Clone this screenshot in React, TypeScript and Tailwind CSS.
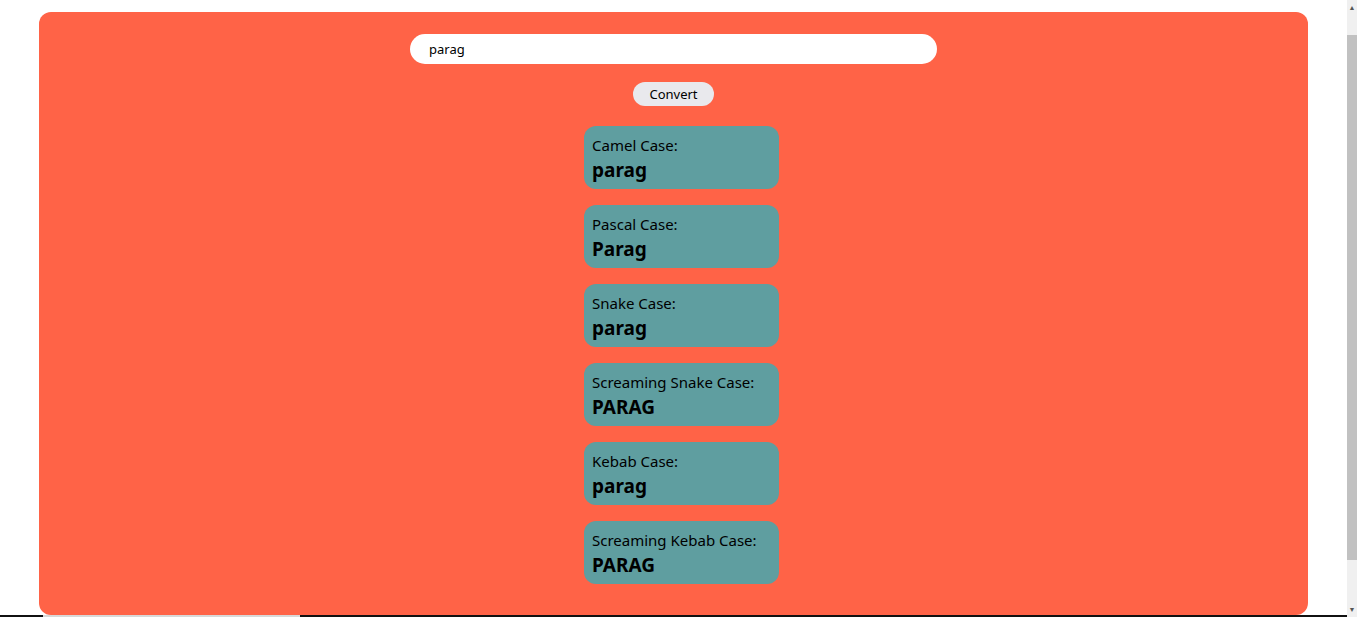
import { useState } from "react";

const font = { fontFamily: '"Noto Sans", "Open Sans", sans-serif' };

function toWords(s: string) {
  return s
    .replace(/([a-z])([A-Z])/g, "$1 $2")
    .split(/[\s_\-]+/)
    .filter(Boolean)
    .map((w) => w.toLowerCase());
}

function CaseCard({ label, value }: { label: string; value: string }) {
  return (
    <div className="w-[195px] h-[63px] rounded-xl bg-[#5f9ea0] px-2 pt-[9px] text-black">
      <div className="text-[15px] leading-[21px]">{label}</div>
      <div className="text-[19px] leading-[28px] font-bold">{value}</div>
    </div>
  );
}

export default function App() {
  const [text, setText] = useState("parag");
  const [words, setWords] = useState(toWords("parag"));

  const cap = (w: string) => w.charAt(0).toUpperCase() + w.slice(1);
  const results = [
    { label: "Camel Case:", value: words.map((w, i) => (i === 0 ? w : cap(w))).join("") },
    { label: "Pascal Case:", value: words.map(cap).join("") },
    { label: "Snake Case:", value: words.join("_") },
    { label: "Screaming Snake Case:", value: words.join("_").toUpperCase() },
    { label: "Kebab Case:", value: words.join("-") },
    { label: "Screaming Kebab Case:", value: words.join("-").toUpperCase() },
  ];

  return (
    <div className="flex h-[617px] w-[1357px] overflow-hidden bg-white" style={font}>
      <div className="flex flex-1 flex-col">
        <main className="flex-1 px-[39px] pt-3">
          {/* main panel */}
          <div className="flex h-[603px] flex-col items-center rounded-xl bg-[#ff6347] pt-[22px]">
            <input
              value={text}
              onChange={(e) => setText(e.target.value)}
              className="h-[30px] w-[527px] rounded-full bg-white px-[19px] text-[13px] text-black outline-none"
            />
            <button
              onClick={() => setWords(toWords(text))}
              className="mt-[18px] h-[24px] w-[81px] rounded-full bg-[#e9e9ed] pt-px text-[13px] text-black"
            >
              Convert
            </button>
            <div className="ml-4 mt-5 flex flex-col gap-4">
              {results.map((r) => (
                <CaseCard key={r.label} label={r.label} value={r.value} />
              ))}
            </div>
          </div>
        </main>
        <div className="flex h-[2px] bg-[#111]">
          <div className="ml-[43px] w-[257px] bg-[#d8d8d8]" />
        </div>
      </div>
      {/* scrollbar */}
      <aside className="flex w-[10px] flex-col bg-[#f0f0f0]">
        <div className="flex h-[35px] items-start justify-center pt-1 text-[7px] leading-none text-[#555]">▲</div>
        <div className="h-[525px] bg-[#c1c1c1]" />
        <div className="flex flex-1 items-end justify-center pb-1 text-[7px] leading-none text-[#555]">▼</div>
      </aside>
    </div>
  );
}
